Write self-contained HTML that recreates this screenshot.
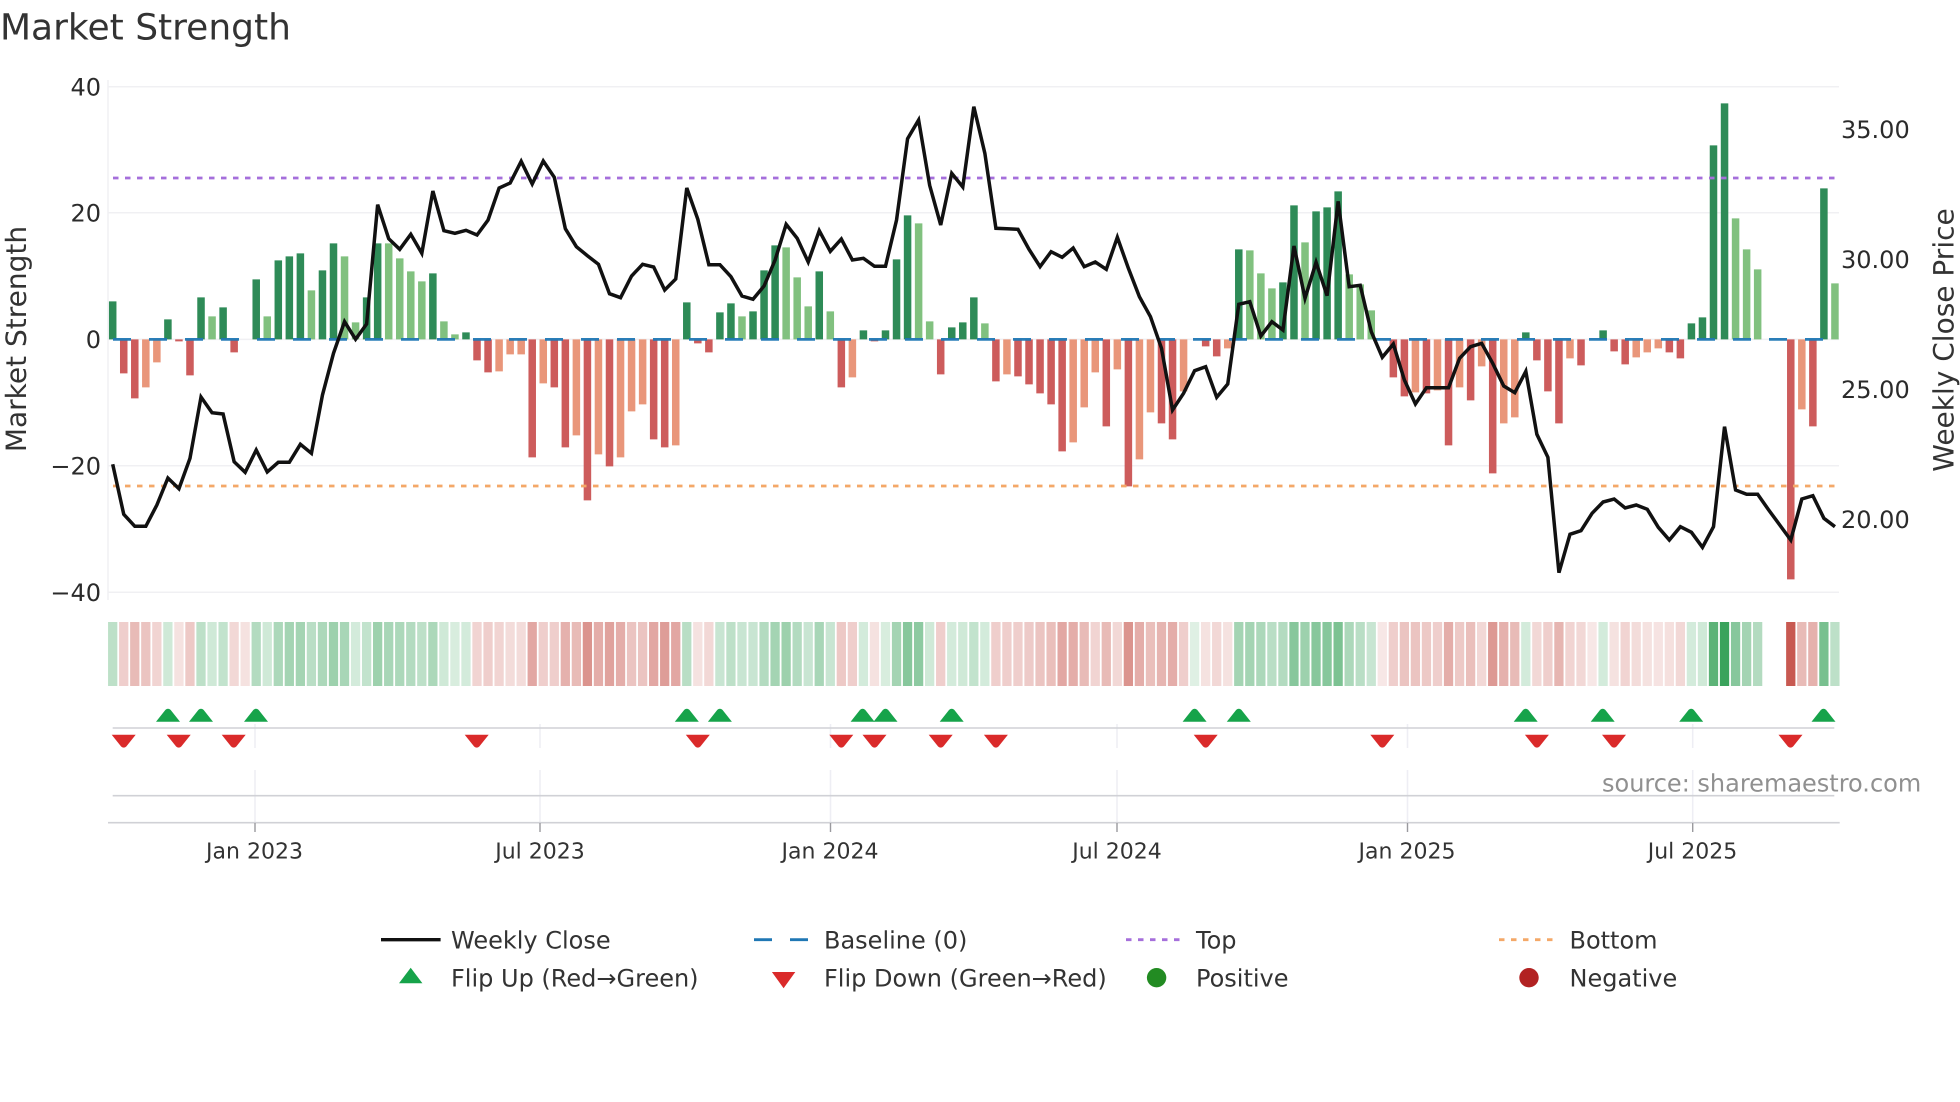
<!DOCTYPE html>
<html lang="en"><head><meta charset="utf-8"><title>Market Strength</title>
<style>
html,body{margin:0;padding:0;background:#fff;width:1960px;height:1102px;overflow:hidden}
svg{display:block}
text{font-family:"DejaVu Sans","Liberation Sans",sans-serif;text-rendering:geometricPrecision}
.g{fill:#25994a}.r{fill:#be3c32}
#h rect{y:622px;width:.84px;height:64px}
.yl{font-size:24px;fill:#2b2b2b;text-anchor:end}
.yr{font-size:24px;fill:#2b2b2b}
.xl{font-size:22px;fill:#333;text-anchor:middle}
.lg{font-size:24px;fill:#333}
.tt{font-size:28px;fill:#333;text-anchor:middle}
</style></head><body>
<svg width="1960" height="1102" viewBox="0 0 1960 1102" xmlns="http://www.w3.org/2000/svg">
<defs>
<path id="u" d="M-12 13L-2.6 1.2Q0-1 2.6 1.2L12 13Z" fill="#16a34a"/>
<path id="d" d="M-12 0L12 0L2.6 11.8Q0 14-2.6 11.8Z" fill="#da2a2a"/>
</defs>
<text x="0" y="39.5" font-size="36" fill="#333">Market Strength</text>

<!-- grid -->
<g stroke="#f0f0f3" stroke-width="1.5" fill="none">
<path d="M108 80V600"/>
<path d="M108 86.7H1839M108 212.7H1839M108 339.4H1839M108 465.7H1839M108 592.3H1839"/>
</g>

<!-- bars -->
<g transform="translate(108.95 339.4) scale(11.04 1)">
<path fill="#2e8b57" d="M0 0v-38h.68v38zM5 0v-20h.68v20zM8 0v-42h.68v42zM10 0v-32h.68v32zM13 0v-60h.68v60zM15 0v-79h.68v79zM16 0v-83h.68v83zM17 0v-86h.68v86zM19 0v-69h.68v69zM20 0v-96h.68v96zM23 0v-42h.68v42zM24 0v-96h.68v96zM29 0v-66h.68v66zM32 0v-7h.68v7zM52 0v-37h.68v37zM55 0v-27h.68v27zM56 0v-36h.68v36zM58 0v-28h.68v28zM59 0v-69h.68v69zM60 0v-94h.68v94zM64 0v-68h.68v68zM68 0v-9h.68v9zM70 0v-9h.68v9zM71 0v-80h.68v80zM72 0v-124h.68v124zM76 0v-12h.68v12zM77 0v-17h.68v17zM78 0v-42h.68v42zM102 0v-90h.68v90zM106 0v-57h.68v57zM107 0v-134h.68v134zM109 0v-128h.68v128zM110 0v-132h.68v132zM111 0v-148h.68v148zM128 0v-7h.68v7zM135 0v-9h.68v9zM143 0v-16h.68v16zM144 0v-22h.68v22zM145 0v-194h.68v194zM146 0v-236h.68v236zM155 0v-151h.68v151z"/>
<path fill="#81c17f" d="M9 0v-23h.68v23zM14 0v-23h.68v23zM18 0v-49h.68v49zM21 0v-83h.68v83zM22 0v-17h.68v17zM25 0v-96h.68v96zM26 0v-81h.68v81zM27 0v-68h.68v68zM28 0v-58h.68v58zM30 0v-18h.68v18zM31 0v-5h.68v5zM57 0v-23h.68v23zM61 0v-92h.68v92zM62 0v-62h.68v62zM63 0v-33h.68v33zM65 0v-28h.68v28zM73 0v-116h.68v116zM74 0v-18h.68v18zM79 0v-16h.68v16zM103 0v-89h.68v89zM104 0v-66h.68v66zM105 0v-51h.68v51zM108 0v-97h.68v97zM112 0v-65h.68v65zM113 0v-55h.68v55zM114 0v-29h.68v29zM147 0v-121h.68v121zM148 0v-90h.68v90zM149 0v-70h.68v70zM156 0v-56h.68v56z"/>
<path fill="#cd5c5c" d="M1 0v34h.68v-34zM2 0v59h.68v-59zM6 0v2h.68v-2zM7 0v36h.68v-36zM11 0v13h.68v-13zM33 0v21h.68v-21zM34 0v33h.68v-33zM38 0v118h.68v-118zM40 0v48h.68v-48zM41 0v108h.68v-108zM43 0v161h.68v-161zM45 0v127h.68v-127zM49 0v100h.68v-100zM50 0v108h.68v-108zM53 0v4h.68v-4zM54 0v13h.68v-13zM66 0v48h.68v-48zM69 0v2h.68v-2zM75 0v35h.68v-35zM80 0v42h.68v-42zM82 0v37h.68v-37zM83 0v45h.68v-45zM84 0v54h.68v-54zM85 0v65h.68v-65zM86 0v112h.68v-112zM90 0v87h.68v-87zM92 0v147h.68v-147zM95 0v84h.68v-84zM96 0v100h.68v-100zM99 0v7h.68v-7zM100 0v17h.68v-17zM116 0v38h.68v-38zM117 0v57h.68v-57zM119 0v54h.68v-54zM121 0v106h.68v-106zM123 0v61h.68v-61zM125 0v134h.68v-134zM129 0v21h.68v-21zM130 0v52h.68v-52zM131 0v84h.68v-84zM133 0v26h.68v-26zM136 0v12h.68v-12zM137 0v25h.68v-25zM141 0v13h.68v-13zM142 0v19h.68v-19zM152 0v240h.68v-240zM154 0v87h.68v-87z"/>
<path fill="#e9967a" d="M3 0v48h.68v-48zM4 0v23h.68v-23zM35 0v32h.68v-32zM36 0v15h.68v-15zM37 0v15h.68v-15zM39 0v44h.68v-44zM42 0v96h.68v-96zM44 0v115h.68v-115zM46 0v118h.68v-118zM47 0v72h.68v-72zM48 0v65h.68v-65zM51 0v106h.68v-106zM67 0v38h.68v-38zM81 0v35h.68v-35zM87 0v103h.68v-103zM88 0v68h.68v-68zM89 0v33h.68v-33zM91 0v30h.68v-30zM93 0v120h.68v-120zM94 0v73h.68v-73zM97 0v52h.68v-52zM101 0v9h.68v-9zM118 0v53h.68v-53zM120 0v51h.68v-51zM122 0v48h.68v-48zM124 0v27h.68v-27zM126 0v84h.68v-84zM127 0v78h.68v-78zM132 0v19h.68v-19zM138 0v18h.68v-18zM139 0v13h.68v-13zM140 0v9h.68v-9zM153 0v70h.68v-70z"/>
</g>

<!-- reference lines -->
<path d="M113 339.4H1835" stroke="#1f77b4" stroke-width="2.8" stroke-dasharray="18 18" fill="none" opacity=".95"/>
<path d="M113 178H1836" stroke="#a56fdb" stroke-width="2.8" stroke-dasharray="5.5 6.5" fill="none"/>
<path d="M113 486H1836" stroke="#f4a868" stroke-width="2.8" stroke-dasharray="5.5 6.5" fill="none"/>

<!-- weekly close -->
<g transform="translate(112.7 0) scale(11.04 1)">
<polyline fill="none" stroke="#111" stroke-width="3.5" vector-effect="non-scaling-stroke" stroke-linejoin="miter" points="0,464.3 1,514.3 2,526.3 3,526.3 4,505 5,478 6,488.7 7,458.3 8,397 9,412.7 10,414 11,461.7 12,472.3 13,450 14,472 15,462.3 16,462.3 17,444.3 18,453.3 19,395 20,353.3 21,321.7 22,339.3 23,324 24,204.7 25,238.7 26,249.3 27,234.3 28,253.3 29,191 30,230.7 31,233.3 32,230.3 33,235 34,220 35,188 36,183 37,161.3 38,184 39,161 40,177.3 41,228.7 42,246.7 43,255.7 44,264.3 45,293.7 46,297.7 47,276 48,264.3 49,267 50,290 51,279 52,188 53,219.3 54,264.7 55,264.7 56,276.7 57,296 58,299.3 59,286 60,260 61,224.3 62,238.3 63,262 64,230.7 65,251.3 66,239 67,260 68,258.3 69,266.3 70,266.3 71,220 72,138.7 73,120 74,185.3 75,225 76,173.3 77,187 78,106.7 79,153.3 80,228.3 81,228.7 82,229.3 83,249.3 84,266.7 85,251.7 86,257.3 87,248 88,266.7 89,262 90,269.3 91,237.3 92,268.3 93,296.7 94,316.7 95,348.3 96,410 97,393.3 98,370.7 99,366.7 100,397.3 101,384 102,304.3 103,301.7 104,336 105,321.7 106,330 107,246 108,298.3 109,262.3 110,295.7 111,201.3 112,286.7 113,285.3 114,331.7 115,357.3 116,344 117,380 118,404 119,387.7 120,387.7 121,387.7 122,358.3 123,346.7 124,343.3 125,363.3 126,386 127,392.7 128,371.3 129,434.3 130,457.3 131,572.7 132,534.3 133,530.7 134,513.3 135,502 136,499 137,508 138,505 139,509.3 140,527.3 141,540 142,526.7 143,532.3 144,547.3 145,526.7 146,426.7 147,490 148,494.3 149,494.3 150,510 151,525 152,540 153,499 154,495.7 155,518.3 156,526.7"/>
</g>

<!-- heat strip -->
<g id="h" transform="translate(108.05 0) scale(11.04 1)">
<rect class="g" x="0" fill-opacity=".3"/><rect class="r" x="1" fill-opacity=".25"/><rect class="r" x="2" fill-opacity=".35"/><rect class="r" x="3" fill-opacity=".3"/><rect class="r" x="4" fill-opacity=".22"/><rect class="g" x="5" fill-opacity=".22"/><rect class="r" x="6" fill-opacity=".15"/><rect class="r" x="7" fill-opacity=".28"/><rect class="g" x="8" fill-opacity=".3"/><rect class="g" x="9" fill-opacity=".22"/><rect class="g" x="10" fill-opacity=".28"/><rect class="r" x="11" fill-opacity=".2"/><rect class="r" x="12" fill-opacity=".15"/><rect class="g" x="13" fill-opacity=".35"/><rect class="g" x="14" fill-opacity=".22"/><rect class="g" x="15" fill-opacity=".38"/><rect class="g" x="16" fill-opacity=".42"/><rect class="g" x="17" fill-opacity=".42"/><rect class="g" x="18" fill-opacity=".32"/><rect class="g" x="19" fill-opacity=".38"/><rect class="g" x="20" fill-opacity=".45"/><rect class="g" x="21" fill-opacity=".4"/><rect class="g" x="22" fill-opacity=".2"/><rect class="g" x="23" fill-opacity=".28"/><rect class="g" x="24" fill-opacity=".45"/><rect class="g" x="25" fill-opacity=".4"/><rect class="g" x="26" fill-opacity=".38"/><rect class="g" x="27" fill-opacity=".35"/><rect class="g" x="28" fill-opacity=".3"/><rect class="g" x="29" fill-opacity=".38"/><rect class="g" x="30" fill-opacity=".22"/><rect class="g" x="31" fill-opacity=".18"/><rect class="g" x="32" fill-opacity=".2"/><rect class="r" x="33" fill-opacity=".22"/><rect class="r" x="34" fill-opacity=".25"/><rect class="r" x="35" fill-opacity=".22"/><rect class="r" x="36" fill-opacity=".18"/><rect class="r" x="37" fill-opacity=".18"/><rect class="r" x="38" fill-opacity=".45"/><rect class="r" x="39" fill-opacity=".25"/><rect class="r" x="40" fill-opacity=".25"/><rect class="r" x="41" fill-opacity=".4"/><rect class="r" x="42" fill-opacity=".35"/><rect class="r" x="43" fill-opacity=".55"/><rect class="r" x="44" fill-opacity=".42"/><rect class="r" x="45" fill-opacity=".48"/><rect class="r" x="46" fill-opacity=".42"/><rect class="r" x="47" fill-opacity=".3"/><rect class="r" x="48" fill-opacity=".3"/><rect class="r" x="49" fill-opacity=".45"/><rect class="r" x="50" fill-opacity=".5"/><rect class="r" x="51" fill-opacity=".45"/><rect class="g" x="52" fill-opacity=".32"/><rect class="r" x="53" fill-opacity=".15"/><rect class="r" x="54" fill-opacity=".2"/><rect class="g" x="55" fill-opacity=".25"/><rect class="g" x="56" fill-opacity=".3"/><rect class="g" x="57" fill-opacity=".25"/><rect class="g" x="58" fill-opacity=".25"/><rect class="g" x="59" fill-opacity=".35"/><rect class="g" x="60" fill-opacity=".42"/><rect class="g" x="61" fill-opacity=".45"/><rect class="g" x="62" fill-opacity=".35"/><rect class="g" x="63" fill-opacity=".25"/><rect class="g" x="64" fill-opacity=".4"/><rect class="g" x="65" fill-opacity=".25"/><rect class="r" x="66" fill-opacity=".28"/><rect class="r" x="67" fill-opacity=".25"/><rect class="g" x="68" fill-opacity=".2"/><rect class="r" x="69" fill-opacity=".15"/><rect class="g" x="70" fill-opacity=".18"/><rect class="g" x="71" fill-opacity=".42"/><rect class="g" x="72" fill-opacity=".55"/><rect class="g" x="73" fill-opacity=".52"/><rect class="g" x="74" fill-opacity=".22"/><rect class="r" x="75" fill-opacity=".25"/><rect class="g" x="76" fill-opacity=".2"/><rect class="g" x="77" fill-opacity=".22"/><rect class="g" x="78" fill-opacity=".28"/><rect class="g" x="79" fill-opacity=".2"/><rect class="r" x="80" fill-opacity=".25"/><rect class="r" x="81" fill-opacity=".25"/><rect class="r" x="82" fill-opacity=".25"/><rect class="r" x="83" fill-opacity=".27"/><rect class="r" x="84" fill-opacity=".3"/><rect class="r" x="85" fill-opacity=".33"/><rect class="r" x="86" fill-opacity=".45"/><rect class="r" x="87" fill-opacity=".42"/><rect class="r" x="88" fill-opacity=".35"/><rect class="r" x="89" fill-opacity=".22"/><rect class="r" x="90" fill-opacity=".35"/><rect class="r" x="91" fill-opacity=".2"/><rect class="r" x="92" fill-opacity=".55"/><rect class="r" x="93" fill-opacity=".42"/><rect class="r" x="94" fill-opacity=".33"/><rect class="r" x="95" fill-opacity=".38"/><rect class="r" x="96" fill-opacity=".42"/><rect class="r" x="97" fill-opacity=".25"/><rect class="g" x="98" fill-opacity=".15"/><rect class="r" x="99" fill-opacity=".15"/><rect class="r" x="100" fill-opacity=".2"/><rect class="r" x="101" fill-opacity=".15"/><rect class="g" x="102" fill-opacity=".42"/><rect class="g" x="103" fill-opacity=".42"/><rect class="g" x="104" fill-opacity=".38"/><rect class="g" x="105" fill-opacity=".32"/><rect class="g" x="106" fill-opacity=".35"/><rect class="g" x="107" fill-opacity=".55"/><rect class="g" x="108" fill-opacity=".45"/><rect class="g" x="109" fill-opacity=".55"/><rect class="g" x="110" fill-opacity=".55"/><rect class="g" x="111" fill-opacity=".6"/><rect class="g" x="112" fill-opacity=".38"/><rect class="g" x="113" fill-opacity=".32"/><rect class="g" x="114" fill-opacity=".25"/><rect class="r" x="115" fill-opacity=".12"/><rect class="r" x="116" fill-opacity=".25"/><rect class="r" x="117" fill-opacity=".3"/><rect class="r" x="118" fill-opacity=".3"/><rect class="r" x="119" fill-opacity=".28"/><rect class="r" x="120" fill-opacity=".25"/><rect class="r" x="121" fill-opacity=".42"/><rect class="r" x="122" fill-opacity=".28"/><rect class="r" x="123" fill-opacity=".33"/><rect class="r" x="124" fill-opacity=".2"/><rect class="r" x="125" fill-opacity=".52"/><rect class="r" x="126" fill-opacity=".4"/><rect class="r" x="127" fill-opacity=".35"/><rect class="g" x="128" fill-opacity=".2"/><rect class="r" x="129" fill-opacity=".2"/><rect class="r" x="130" fill-opacity=".25"/><rect class="r" x="131" fill-opacity=".38"/><rect class="r" x="132" fill-opacity=".22"/><rect class="r" x="133" fill-opacity=".2"/><rect class="r" x="134" fill-opacity=".12"/><rect class="g" x="135" fill-opacity=".2"/><rect class="r" x="136" fill-opacity=".15"/><rect class="r" x="137" fill-opacity=".22"/><rect class="r" x="138" fill-opacity=".18"/><rect class="r" x="139" fill-opacity=".15"/><rect class="r" x="140" fill-opacity=".14"/><rect class="r" x="141" fill-opacity=".16"/><rect class="r" x="142" fill-opacity=".2"/><rect class="g" x="143" fill-opacity=".2"/><rect class="g" x="144" fill-opacity=".22"/><rect class="g" x="145" fill-opacity=".75"/><rect class="g" x="146" fill-opacity=".9"/><rect class="g" x="147" fill-opacity=".55"/><rect class="g" x="148" fill-opacity=".42"/><rect class="g" x="149" fill-opacity=".35"/><rect class="r" x="152" fill-opacity=".85"/><rect class="r" x="153" fill-opacity=".35"/><rect class="r" x="154" fill-opacity=".4"/><rect class="g" x="155" fill-opacity=".62"/><rect class="g" x="156" fill-opacity=".3"/>
</g>

<!-- lower panels -->
<g stroke="#eeeef4" stroke-width="1.5" fill="none">
<path d="M255 724V748M255 770V822M540 724V748M540 770V822M830.5 724V748M830.5 770V822M1117 724V748M1117 770V822M1407.5 724V748M1407.5 770V822M1692.7 724V748M1692.7 770V822"/>
</g>
<g stroke="#d0d1d6" stroke-width="1.6" fill="none">
<path d="M112.7 728H1834.3M112.7 795.7H1834.3M108 822.7H1839.7"/>
</g>
<g stroke="#9a9a9e" stroke-width="1.4" fill="none">
<path d="M255 823V832M540 823V832M830.5 823V832M1117 823V832M1407.5 823V832M1692.7 823V832"/>
</g>

<!-- flips -->
<g>
<use href="#u" x="168" y="708.7"/><use href="#u" x="201" y="708.7"/><use href="#u" x="256" y="708.7"/><use href="#u" x="686.8" y="708.7"/><use href="#u" x="719.9" y="708.7"/><use href="#u" x="862.6" y="708.7"/><use href="#u" x="885.5" y="708.7"/><use href="#u" x="951.7" y="708.7"/><use href="#u" x="1194.6" y="708.7"/><use href="#u" x="1238.8" y="708.7"/><use href="#u" x="1525.7" y="708.7"/><use href="#u" x="1602.7" y="708.7"/><use href="#u" x="1691.2" y="708.7"/><use href="#u" x="1823.5" y="708.7"/>
<use href="#d" x="123.7" y="734.7"/><use href="#d" x="178.7" y="734.7"/><use href="#d" x="233.7" y="734.7"/><use href="#d" x="476.7" y="734.7"/><use href="#d" x="697.8" y="734.7"/><use href="#d" x="841.3" y="734.7"/><use href="#d" x="874.5" y="734.7"/><use href="#d" x="940.7" y="734.7"/><use href="#d" x="995.9" y="734.7"/><use href="#d" x="1205.7" y="734.7"/><use href="#d" x="1382.3" y="734.7"/><use href="#d" x="1536.9" y="734.7"/><use href="#d" x="1614" y="734.7"/><use href="#d" x="1790.5" y="734.7"/>
</g>

<!-- axis labels -->
<text class="yl" x="101" y="95.3">40</text>
<text class="yl" x="101" y="221.3">20</text>
<text class="yl" x="101" y="348">0</text>
<text class="yl" x="101" y="474.3">−20</text>
<text class="yl" x="101" y="600.9">−40</text>
<text class="yr" x="1841" y="138">35.00</text>
<text class="yr" x="1841" y="268">30.00</text>
<text class="yr" x="1841" y="398">25.00</text>
<text class="yr" x="1841" y="528">20.00</text>
<text class="tt" transform="translate(26 339) rotate(-90)">Market Strength</text>
<text class="tt" transform="translate(1953.5 340) rotate(-90)">Weekly Close Price</text>
<text class="xl" x="254.5" y="858.3">Jan 2023</text>
<text class="xl" x="540" y="858.3">Jul 2023</text>
<text class="xl" x="830" y="858.3">Jan 2024</text>
<text class="xl" x="1117" y="858.3">Jul 2024</text>
<text class="xl" x="1407" y="858.3">Jan 2025</text>
<text class="xl" x="1692.5" y="858.3">Jul 2025</text>
<text x="1602" y="791.7" font-size="24" fill="#909090">source: sharemaestro.com</text>

<!-- legend -->
<path d="M381 939.7H440.6" stroke="#111" stroke-width="3.4" fill="none"/>
<path d="M754 939.7H772M790 939.7H808" stroke="#1f77b4" stroke-width="2.8" fill="none"/>
<path d="M1126 939.7H1181" stroke="#a56fdb" stroke-width="2.8" stroke-dasharray="5.5 6.5" fill="none"/>
<path d="M1499 939.7H1554" stroke="#f4a868" stroke-width="2.8" stroke-dasharray="5.5 6.5" fill="none"/>
<path d="M410.7 967.7L422.4 983.3H399Z" fill="#16a34a"/>
<path d="M783.6 988.3L795.3 972H771.9Z" fill="#da2a2a"/>
<circle cx="1156.6" cy="977.7" r="9.7" fill="#228b22"/>
<circle cx="1529" cy="977.7" r="9.7" fill="#b22222"/>
<text class="lg" x="451" y="948.3">Weekly Close</text>
<text class="lg" x="824" y="948.3">Baseline (0)</text>
<text class="lg" x="1196" y="948.3">Top</text>
<text class="lg" x="1569.5" y="948.3">Bottom</text>
<text class="lg" x="451" y="986.7">Flip Up (Red→Green)</text>
<text class="lg" x="824" y="986.7">Flip Down (Green→Red)</text>
<text class="lg" x="1196" y="986.7">Positive</text>
<text class="lg" x="1569.5" y="986.7">Negative</text>
</svg>
</body></html>
